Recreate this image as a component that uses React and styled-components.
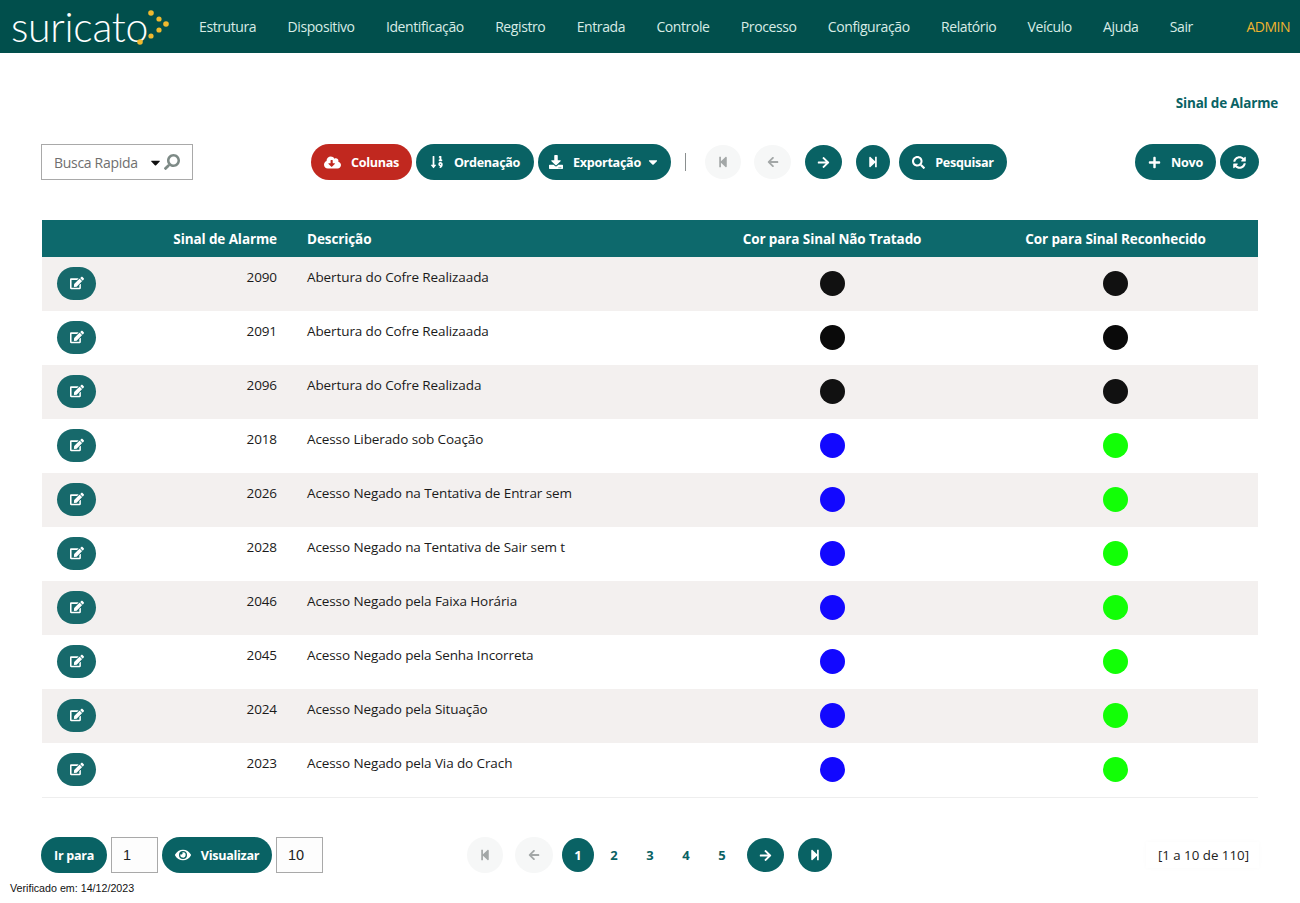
import React from 'react';
import styled, { createGlobalStyle } from 'styled-components';
import {
  FaCloudDownloadAlt, FaSortNumericDown, FaDownload, FaCaretDown, FaStepBackward, FaStepForward,
  FaArrowLeft, FaArrowRight, FaSearch, FaPlus, FaSyncAlt, FaEdit, FaEye,
} from 'react-icons/fa';

const teal = '#096264';
const font = '"Open Sans", "Noto Sans", sans-serif';

const GlobalStyle = createGlobalStyle`
  html, body { margin: 0; padding: 0; background: #fff; }
  body { font-family: ${font}; color: #1a1a1a; }
  * { box-sizing: border-box; }
`;

const Page = styled.div`
  width: 1300px;
  height: 903px;
  overflow: hidden;
`;

const Navbar = styled.nav`
  height: 53px;
  background: #014f4c;
  display: flex;
  align-items: center;
  padding-right: 10px;
`;

const Logo = styled.div`
  width: 199px;
  padding-left: 11px;
  display: flex;
  align-items: center;
  color: #fff;
  font-family: Lato, sans-serif;
  font-weight: 300;
  font-size: 41px;
  line-height: 53px;
  letter-spacing: -0.3px;
  svg { margin-left: -11px; flex: none; }
`;

const NavItem = styled.a`
  color: #d8ece6;
  font-size: 14px;
  letter-spacing: -0.4px;
  margin-right: 31.3px;
  white-space: nowrap;
`;

const AdminLink = styled.a`
  margin-left: auto;
  color: #f0b32e;
  font-size: 14px;
  letter-spacing: -0.5px;
`;

const Title = styled.div`
  height: 91px;
  padding: 41px 22px 0 0;
  text-align: right;
  color: ${teal};
  font-size: 13.5px;
  font-weight: 700;
  letter-spacing: -0.2px;
`;

const Toolbar = styled.div`
  display: flex;
  align-items: center;
  height: 36px;
  padding: 0 41px;
`;

const SearchBox = styled.div`
  width: 152px;
  height: 36px;
  border: 1px solid #a9a9a9;
  display: flex;
  align-items: center;
  padding: 0 12px;
  color: #6f6f6f;
  font-size: 14px;
  letter-spacing: -0.3px;
  span { flex: 1; white-space: nowrap; }
  svg + svg { margin-left: 1px; color: #7d8a86; }
`;

const Group = styled.div`
  display: flex;
  align-items: center;
  gap: ${p => p.$gap ?? 4}px;
  margin-left: ${p => p.$left ?? 0}px;
  ${p => p.$auto && 'margin-left: auto;'}
`;

const PillButton = styled.button`
  height: 36px;
  width: ${p => p.$width}px;
  border: none;
  border-radius: 18px;
  background: ${p => (p.$red ? '#c1281f' : teal)};
  color: #fff;
  font-family: ${font};
  font-weight: 700;
  font-size: 12.6px;
  letter-spacing: -0.3px;
  display: flex;
  align-items: center;
  justify-content: center;
  gap: 10px;
  padding: 0;
  margin-left: ${p => p.$left ?? 0}px;
  white-space: nowrap;
`;

const RoundButton = styled.button`
  height: ${p => p.$height ?? 34}px;
  width: ${p => p.$width ?? 34}px;
  border: none;
  border-radius: 50%;
  background: ${p => (p.$off ? '#f6f7f7' : teal)};
  color: ${p => (p.$off ? '#a3a7a7' : '#fff')};
  display: flex;
  align-items: center;
  justify-content: center;
  padding: 0;
  margin-left: ${p => p.$left ?? 0}px;
`;

const Divider = styled.div`
  width: 1px;
  height: 18px;
  background: #8a8f8f;
  margin: 0 19px 0 14px;
`;

const Table = styled.div`
  margin: 40px 42px 0;
  border-bottom: 1px solid #eeeeee;
`;

const columns = '90px 160px 398px 284px 283px';

const HeadRow = styled.div`
  display: grid;
  grid-template-columns: ${columns};
  height: 37px;
  align-items: center;
  background: #0d696c;
  color: #fff;
  font-weight: 700;
  font-size: 13.5px;
  letter-spacing: -0.1px;
  padding-top: 1px;
`;

const Row = styled.div`
  display: grid;
  grid-template-columns: ${columns};
  height: 54px;
  background: ${p => (p.$alt ? '#f3f0ef' : '#fff')};
  font-size: 13.5px;
  letter-spacing: -0.1px;
`;

const NumberCell = styled.div`
  text-align: right;
  padding: 11px 15px 0 0;
`;

const HeadNumber = styled.div`
  text-align: right;
  padding-right: 15px;
`;

const TextCell = styled.div`
  padding: 11px 0 0 15px;
  white-space: nowrap;
`;

const HeadText = styled.div`
  padding-left: 15px;
`;

const HeadCenter = styled.div`
  text-align: center;
`;

const EditCell = styled.div`
  padding: 10px 0 0 15px;
`;

const EditButton = styled.button`
  width: 39px;
  height: 33px;
  border: none;
  border-radius: 17px;
  background: #17696b;
  color: #fff;
  display: flex;
  align-items: center;
  justify-content: center;
  padding: 0 0 2px;
`;

const ColorCell = styled.div`
  display: flex;
  justify-content: center;
  padding-top: 14px;
`;

const Dot = styled.div`
  width: 25px;
  height: 25px;
  border-radius: 50%;
  background: ${p => p.$color};
`;

const Footer = styled.div`
  display: flex;
  align-items: center;
  height: 36px;
  margin-top: 39px;
  padding: 0 41px;
`;

const NumberInput = styled.div`
  width: 47px;
  height: 36px;
  border: 1px solid #a9a9a9;
  background: #fdfdfd;
  display: flex;
  align-items: center;
  padding-left: 11px;
  font-family: "Liberation Sans", sans-serif;
  font-size: 14.5px;
  color: #222;
`;

const PageNumber = styled.div`
  width: ${p => (p.$active ? 32 : 36)}px;
  height: ${p => (p.$active ? 34 : 36)}px;
  margin-left: ${p => p.$left ?? 0}px;
  border-radius: 50%;
  display: flex;
  align-items: center;
  justify-content: center;
  font-weight: 700;
  font-size: 13px;
  background: ${p => (p.$active ? teal : 'transparent')};
  color: ${p => (p.$active ? '#fff' : teal)};
`;

const RangeLabel = styled.div`
  margin-left: auto;
  padding: 0 10px 0 12px;
  height: 26px;
  display: flex;
  align-items: center;
  font-size: 13.3px;
  color: #222;
  box-shadow: 0 0 5px rgba(0, 0, 0, 0.025);
`;

const Verified = styled.div`
  padding: 9px 0 0 10px;
  font-family: "Liberation Sans", sans-serif;
  font-size: 10.7px;
  color: #111;
`;

const menu = ['Estrutura', 'Dispositivo', 'Identificação', 'Registro', 'Entrada', 'Controle', 'Processo', 'Configuração', 'Relatório', 'Veículo', 'Ajuda', 'Sair'];

const blue = '#1208ff';
const green = '#12ff06';
const black = '#111111';

const rows = [
  ['2090', 'Abertura do Cofre Realizaada', black, black],
  ['2091', 'Abertura do Cofre Realizaada', '#0a0a0a', '#0a0a0a'],
  ['2096', 'Abertura do Cofre Realizada', black, black],
  ['2018', 'Acesso Liberado sob Coação', blue, green],
  ['2026', 'Acesso Negado na Tentativa de Entrar sem', blue, green],
  ['2028', 'Acesso Negado na Tentativa de Sair sem t', blue, green],
  ['2046', 'Acesso Negado pela Faixa Horária', blue, green],
  ['2045', 'Acesso Negado pela Senha Incorreta', blue, green],
  ['2024', 'Acesso Negado pela Situação', blue, green],
  ['2023', 'Acesso Negado pela Via do Crach', blue, green],
];

const LogoDots = () => (
  <svg width="36" height="53" viewBox="0 0 36 53" fill="#efb92f">
    <circle cx="14" cy="13" r="2.8" />
    <circle cx="22" cy="19" r="2.6" />
    <circle cx="29" cy="24" r="2.8" />
    <circle cx="22" cy="30" r="2.6" />
    <circle cx="14" cy="36" r="2.6" />
    <circle cx="3" cy="42" r="2.8" />
  </svg>
);

export default function App() {
  return (
    <Page>
      <GlobalStyle />
      <Navbar>
        <Logo>suricato<LogoDots /></Logo>
        {menu.map(item => <NavItem key={item}>{item}</NavItem>)}
        <AdminLink>ADMIN</AdminLink>
      </Navbar>

      <Title>Sinal de Alarme</Title>

      <Toolbar>
        <SearchBox>
          <span>Busca Rapida</span>
          <FaCaretDown size={15} color="#111" />
          <FaSearch size={16} style={{ transform: 'scaleX(-1)' }} />
        </SearchBox>
        <Group $left={118}>
          <PillButton $red $width={101}><FaCloudDownloadAlt size={17} />Colunas</PillButton>
          <PillButton $width={118}><FaSortNumericDown size={14} />Ordenação</PillButton>
          <PillButton $width={133}><FaDownload size={14} />Exportação<FaCaretDown size={14} style={{ marginLeft: -5 }} /></PillButton>
        </Group>
        <Divider />
        <RoundButton $off $width={36}><FaStepBackward size={12} /></RoundButton>
        <RoundButton $off $width={37} $left={13}><FaArrowLeft size={12} /></RoundButton>
        <RoundButton $width={37} $left={14}><FaArrowRight size={13} /></RoundButton>
        <RoundButton $left={14}><FaStepForward size={12} /></RoundButton>
        <PillButton $width={108} $left={9}><FaSearch size={13} />Pesquisar</PillButton>
        <Group $auto>
          <PillButton $width={81}><FaPlus size={13} />Novo</PillButton>
          <RoundButton $width={39}><FaSyncAlt size={13} /></RoundButton>
        </Group>
      </Toolbar>

      <Table>
        <HeadRow>
          <div />
          <HeadNumber>Sinal de Alarme</HeadNumber>
          <HeadText>Descrição</HeadText>
          <HeadCenter>Cor para Sinal Não Tratado</HeadCenter>
          <HeadCenter>Cor para Sinal Reconhecido</HeadCenter>
        </HeadRow>
        {rows.map((r, i) => (
          <Row key={r[0]} $alt={i % 2 === 0}>
            <EditCell><EditButton><FaEdit size={14} /></EditButton></EditCell>
            <NumberCell>{r[0]}</NumberCell>
            <TextCell>{r[1]}</TextCell>
            <ColorCell><Dot $color={r[2]} /></ColorCell>
            <ColorCell><Dot $color={r[3]} /></ColorCell>
          </Row>
        ))}
      </Table>

      <Footer>
        <Group>
          <PillButton $width={66}>Ir para</PillButton>
          <NumberInput>1</NumberInput>
          <PillButton $width={110}><FaEye size={16} />Visualizar</PillButton>
          <NumberInput>10</NumberInput>
        </Group>
        <Group $gap={0} $left={144}>
          <RoundButton $off $width={36} $height={36}><FaStepBackward size={12} /></RoundButton>
          <RoundButton $off $width={38} $height={36} $left={12}><FaArrowLeft size={12} /></RoundButton>
          <PageNumber $active $left={9}>1</PageNumber>
          <PageNumber $left={2}>2</PageNumber>
          <PageNumber>3</PageNumber>
          <PageNumber>4</PageNumber>
          <PageNumber>5</PageNumber>
          <RoundButton $width={37} $left={7}><FaArrowRight size={13} /></RoundButton>
          <RoundButton $left={14}><FaStepForward size={12} /></RoundButton>
        </Group>
        <RangeLabel>[1 a 10 de 110]</RangeLabel>
      </Footer>
      <Verified>Verificado em: 14/12/2023</Verified>
    </Page>
  );
}
